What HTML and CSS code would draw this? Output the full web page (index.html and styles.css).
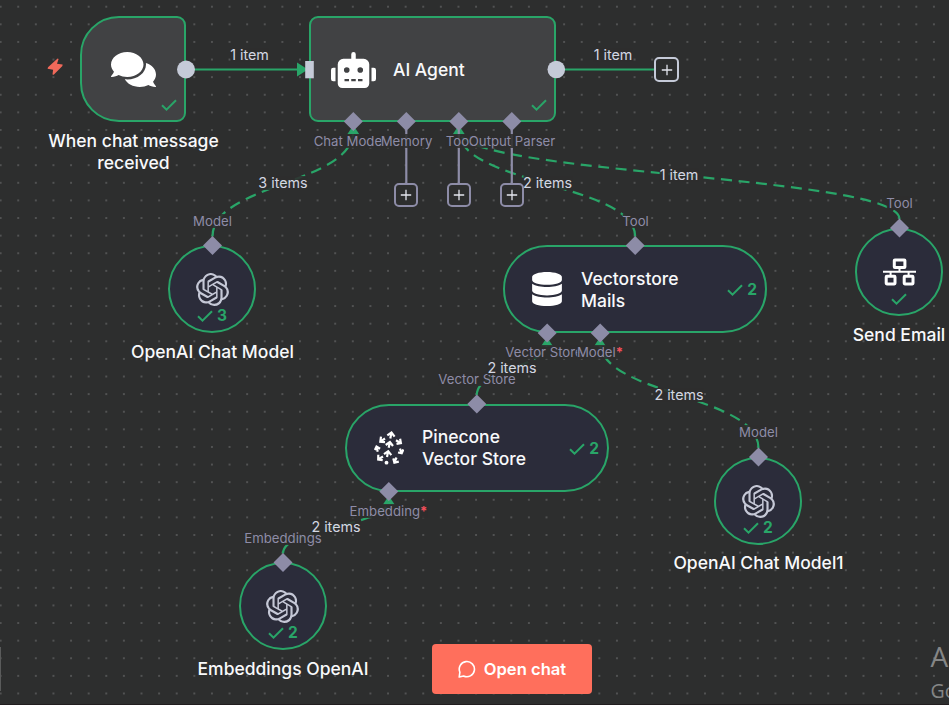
FILE: index.html
```html
<!DOCTYPE html>
<html lang="en">
<head>
<meta charset="utf-8">
<title>Workflow canvas</title>
<link rel="stylesheet" href="styles.css">
</head>
<body>
<svg class="defs" width="0" height="0" aria-hidden="true">
  <symbol id="check" viewBox="0 0 16 12"><path d="M1 6.2 5.5 10.6 15 1.2" fill="none" stroke="currentColor" stroke-width="2"/></symbol>
  <symbol id="plus" viewBox="0 0 12 12"><path d="M6 .8v10.4M.8 6h10.4" fill="none" stroke="currentColor" stroke-width="1.3"/></symbol>
  <symbol id="openai" viewBox="0 0 24 24"><path fill="currentColor" d="M22.2819 9.8211a5.9847 5.9847 0 0 0-.5157-4.9108 6.0462 6.0462 0 0 0-6.5098-2.9A6.0651 6.0651 0 0 0 4.9807 4.1818a5.9847 5.9847 0 0 0-3.9977 2.9 6.0462 6.0462 0 0 0 .7427 7.0966 5.98 5.98 0 0 0 .511 4.9107 6.051 6.051 0 0 0 6.5146 2.9001A5.9847 5.9847 0 0 0 13.2599 24a6.0557 6.0557 0 0 0 5.7718-4.2058 5.9894 5.9894 0 0 0 3.9977-2.9001 6.0557 6.0557 0 0 0-.7475-7.0729zm-9.022 12.6081a4.4755 4.4755 0 0 1-2.8764-1.0408l.1419-.0804 4.7783-2.7582a.7948.7948 0 0 0 .3927-.6813v-6.7369l2.02 1.1686a.071.071 0 0 1 .038.052v5.5826a4.504 4.504 0 0 1-4.4945 4.4944zm-9.6607-4.1254a4.4708 4.4708 0 0 1-.5346-3.0137l.142.0852 4.783 2.7582a.7712.7712 0 0 0 .7806 0l5.8428-3.3685v2.3324a.0804.0804 0 0 1-.0332.0615L9.74 19.9502a4.4992 4.4992 0 0 1-6.1408-1.6464zM2.3408 7.8956a4.485 4.485 0 0 1 2.3655-1.9728V11.6a.7664.7664 0 0 0 .3879.6765l5.8144 3.3543-2.0201 1.1685a.0757.0757 0 0 1-.071 0l-4.8303-2.7865A4.504 4.504 0 0 1 2.3408 7.872zm16.5963 3.8558L13.1038 8.364 15.1192 7.2a.0757.0757 0 0 1 .071 0l4.8303 2.7913a4.4944 4.4944 0 0 1-.6765 8.1042v-5.6772a.79.79 0 0 0-.407-.667zm2.0107-3.0231l-.142-.0852-4.7735-2.7818a.7759.7759 0 0 0-.7854 0L9.409 9.2297V6.8974a.0662.0662 0 0 1 .0284-.0615l4.8303-2.7866a4.4992 4.4992 0 0 1 6.6802 4.66zM8.3065 12.863l-2.02-1.1638a.0804.0804 0 0 1-.038-.0567V6.0742a4.4992 4.4992 0 0 1 7.3757-3.4537l-.142.0805L8.704 5.459a.7948.7948 0 0 0-.3927.6813zm1.0976-2.3654l2.602-1.4998 2.6069 1.4998v2.9994l-2.5974 1.4997-2.6067-1.4997Z"/></symbol>
</svg>

<main class="canvas">
  <svg class="edges" width="949" height="705" viewBox="0 0 949 705">
    <g class="solid">
      <path d="M194 69.5H298"/>
      <path d="M564 69.5H655"/>
    </g>
    <g class="dashed">
      <path d="M212.5 236.5C212.5 184 353.3 184 353.3 131"/>
      <path d="M635.2 236.5C635.2 184 458.8 184 458.8 131"/>
      <path d="M899.5 219C899.5 175 458.8 175 458.8 131"/>
      <path d="M476.8 395C476.8 368.5 547 368.5 547 342"/>
      <path d="M758.5 448C758.5 395 600 395 600 342"/>
      <path d="M283 553.5C283 527 388.8 527 388.8 500"/>
    </g>
    <g class="arrows">
      <path d="M297 62.5v14l11-7z"/>
      <path d="M347.3 134.3h12l-6-9z"/>
      <path d="M452.8 134.3h12l-6-9z"/>
      <path d="M541 346.2h12l-6-9z"/>
      <path d="M594 346.2h12l-6-9z"/>
      <path d="M382.8 504.7h12l-6-9z"/>
    </g>
    <path class="stub" d="M406.3 130V184M458.8 130V184M511.8 130V184"/>
  </svg>

  <svg class="bolt" viewBox="0 0 16 18"><path d="M10.6.5 1 9.3l-.4 1.5 5.5 1L5.5 16.5l1.2.2L15.4 8l.2-1.4L10 5.7 11.6 1z" fill="currentColor"/></svg>

  <section class="node trigger">
    <svg class="i-chat" viewBox="0 32 576 448"><path fill="currentColor" d="M416 192c0-88.4-93.1-160-208-160S0 103.6 0 192c0 34.3 14.1 65.9 38 92-13.4 30.2-35.5 54.2-35.8 54.5-2.2 2.3-2.8 5.7-1.5 8.7S4.8 352 8 352c36.6 0 66.9-12.3 88.7-25 32.2 15.7 70.3 25 111.3 25 114.9 0 208-71.6 208-160zm122 220c23.9-26 38-57.7 38-92 0-66.9-53.5-124.2-129.3-148.1.9 6.6 1.3 13.3 1.3 20.1 0 105.9-107.7 192-240 192-10.8 0-21.3-.8-31.7-1.9C207.8 439.6 281.8 480 368 480c41 0 79.1-9.2 111.3-25 21.8 12.7 52.1 25 88.7 25 3.2 0 6.1-1.9 7.3-4.8 1.3-2.9.7-6.3-1.5-8.7-.3-.3-22.4-24.2-35.8-54.5z"/></svg>
    <span class="corner"><svg class="check"><use href="#check"/></svg></span>
  </section>
  <h2 class="caption c-trigger">When chat message<br>received</h2>

  <section class="node agent">
    <svg class="i-robot" viewBox="0 0 640 512"><path fill="currentColor" d="M32,224H64V416H32A31.96,31.96,0,0,1,0,384V256A31.96,31.96,0,0,1,32,224Zm512-48V448a64.06,64.06,0,0,1-64,64H160a64.06,64.06,0,0,1-64-64V176a79.974,79.974,0,0,1,80-80H288V32a32,32,0,0,1,64,0V96H464A79.974,79.974,0,0,1,544,176ZM264,256a40,40,0,1,0-40,40A39.997,39.997,0,0,0,264,256Zm-8,128H192v32h64Zm96,0H288v32h64ZM456,256a40,40,0,1,0-40,40A39.997,39.997,0,0,0,456,256Zm-8,128H384v32h64ZM640,256V384a31.96,31.96,0,0,1-32,32H576V224h32A31.96,31.96,0,0,1,640,256Z"/></svg>
    <h2 class="name">AI Agent</h2>
    <span class="corner"><svg class="check"><use href="#check"/></svg></span>
  </section>

  <section class="node round n-model">
    <svg class="i-openai"><use href="#openai"/></svg>
    <div class="runs"><svg class="check"><use href="#check"/></svg>3</div>
  </section>
  <h2 class="caption c-model">OpenAI Chat Model</h2>

  <section class="node pill n-vector">
    <svg class="i-db" viewBox="0 0 448 512"><path fill="currentColor" d="M448 73.143v45.714C448 159.143 347.667 192 224 192S0 159.143 0 118.857V73.143C0 32.857 100.333 0 224 0s224 32.857 224 73.143zM448 176v102.857C448 319.143 347.667 352 224 352S0 319.143 0 278.857V176c48.125 33.143 136.208 48.572 224 48.572S399.874 209.143 448 176zm0 160v102.857C448 479.143 347.667 512 224 512S0 479.143 0 438.857V336c48.125 33.143 136.208 48.572 224 48.572S399.874 369.143 448 336z"/></svg>
    <h2 class="name">Vectorstore<br>Mails</h2>
    <div class="runs"><svg class="check"><use href="#check"/></svg>2</div>
  </section>

  <section class="node pill n-pine">
    <svg class="i-pine" viewBox="0 0 30 34" fill="none" stroke="currentColor" stroke-width="2.2">
      <path d="M16.3 7.5 17.4 2M13.3 4.4 17.5 1.5 20.6 5.6"/>
      <path d="M14.7 16.8 15.8 11.5M11.7 14 15.9 11 19 15"/>
      <path d="M13 26 14.1 20.6M10 23.2 14.2 20.2 17.3 24.2"/>
      <path d="M11 7.5 6.7 10.4M7 5.6 6.3 10.7 11 11.2"/>
      <path d="M22 9.3 26.4 12M22.5 12.9 26.9 12.2 26.1 7.7"/>
      <path d="M3.7 20.7 2.6 15.6M.8 19 2.5 15.5 6.1 17.7"/>
      <path d="M26 17.7 27.5 22M24 21.5 27.7 22.2 29.3 18.5"/>
      <path d="M9 25.5 4.5 28.3M4.3 23.8 4.2 28.5 8.7 29.2"/>
      <path d="M22.5 26.5 20.5 31.4M19.3 27.4 20.4 31.6 24.8 30.6"/>
      <circle cx="12.5" cy="31.7" r="1.9" fill="currentColor" stroke="none"/>
    </svg>
    <h2 class="name">Pinecone<br>Vector Store</h2>
    <div class="runs"><svg class="check"><use href="#check"/></svg>2</div>
  </section>

  <section class="node round n-mail">
    <svg class="i-net" viewBox="0 0 33 28" fill="none" stroke="currentColor" stroke-width="3"><rect x="11.3" y="2" width="10.6" height="7.6" rx=".6"/><rect x="3.2" y="18.3" width="8.8" height="7.6" rx=".6"/><rect x="21.2" y="18.3" width="8.8" height="7.6" rx=".6"/><path d="M0 13.8h33M16.5 10v4M7.6 14v4M25.6 14v4" stroke-width="2"/></svg>
    <div class="runs"><svg class="check"><use href="#check"/></svg></div>
  </section>
  <h2 class="caption c-mail">Send Email</h2>

  <section class="node round n-model1">
    <svg class="i-openai"><use href="#openai"/></svg>
    <div class="runs"><svg class="check"><use href="#check"/></svg>2</div>
  </section>
  <h2 class="caption c-model1">OpenAI Chat Model1</h2>

  <section class="node round n-embed">
    <svg class="i-openai"><use href="#openai"/></svg>
    <div class="runs"><svg class="check"><use href="#check"/></svg>2</div>
  </section>
  <h2 class="caption c-embed">Embeddings OpenAI</h2>

  <svg class="handles" width="949" height="705" viewBox="0 0 949 705">
    <g class="main">
      <circle cx="186" cy="69.5" r="9"/>
      <circle cx="556.3" cy="69.5" r="8.8"/>
      <rect x="305.2" y="61" width="8.6" height="17.3"/>
    </g>
    <g class="sub">
      <path d="M353.3 112 362.8 121.5 353.3 131 343.8 121.5z"/>
      <path d="M406.3 112 415.8 121.5 406.3 131 396.8 121.5z"/>
      <path d="M458.8 112 468.3 121.5 458.8 131 449.3 121.5z"/>
      <path d="M511.8 112 521.3 121.5 511.8 131 502.3 121.5z"/>
      <path d="M212.5 236 222 245.5 212.5 255 203 245.5z"/>
      <path d="M635.2 236 644.7 245.5 635.2 255 625.7 245.5z"/>
      <path d="M547.2 323.5 556.7 333 547.2 342.5 537.7 333z"/>
      <path d="M600.2 323.5 609.7 333 600.2 342.5 590.7 333z"/>
      <path d="M476.8 394.5 486.3 404 476.8 413.5 467.3 404z"/>
      <path d="M388.8 482 398.3 491.5 388.8 501 379.3 491.5z"/>
      <path d="M283 553 292.5 562.5 283 572 273.5 562.5z"/>
      <path d="M758.5 447.5 768 457 758.5 466.5 749 457z"/>
      <path d="M899.5 218.5 909 228 899.5 237.5 890 228z"/>
    </g>
  </svg>

  <span class="port p-chat">Chat Model</span>
  <span class="port p-memory">Memory</span>
  <span class="port p-tool">Tool</span>
  <span class="port p-parser">Output Parser</span>
  <span class="port p-model">Model</span>
  <span class="port p-vtool">Tool</span>
  <span class="port p-mtool">Tool</span>
  <span class="port p-store">Vector Store</span>
  <span class="port p-vmodel">Model<b>*</b></span>
  <span class="port p-pstore">Vector Store</span>
  <span class="port p-embed">Embedding<b>*</b></span>
  <span class="port p-embeds">Embeddings</span>
  <span class="port p-model1">Model</span>

  <span class="count k1">1 item</span>
  <span class="count k2">1 item</span>
  <span class="count k3">3 items</span>
  <span class="count k4">2 items</span>
  <span class="count k5">1 item</span>
  <span class="count k6">2 items</span>
  <span class="count k7">2 items</span>
  <span class="count k8">2 items</span>

  <button class="add add-out"><svg><use href="#plus"/></svg></button>
  <button class="add add-memory"><svg><use href="#plus"/></svg></button>
  <button class="add add-tool"><svg><use href="#plus"/></svg></button>
  <button class="add add-parser"><svg><use href="#plus"/></svg></button>

  <button class="open-chat">
    <svg viewBox="0 0 18 18" fill="none" stroke="currentColor" stroke-width="1.6" stroke-linejoin="round" stroke-linecap="round"><path d="M1.9 12.2A7.6 7.6 0 1 1 5.6 16L1.2 17z"/></svg>
    Open chat
  </button>

  <div class="watermark"><span class="big">A</span><span class="small">Go</span></div>
  <i class="grip"></i>
</main>
</body>
</html>
```
FILE: styles.css
```css
:root {
  --bg: #2d2e2e;
  --green: #29a568;
  --sub: #8d8ca7;
  --main: #c5cad8;
}

body {
  margin: 0;
  background: var(--bg);
  font-family: Inter, "Liberation Sans", sans-serif;
}

.defs { position: absolute; }

.canvas {
  position: relative;
  width: 949px;
  height: 705px;
  box-sizing: border-box;
  overflow: hidden;
  border-bottom: 1px solid #211d1f;
  background: radial-gradient(circle at center, #747576 0, #747576 .45px, transparent .95px) -8.2px -2.1px / 17.62px 17.62px var(--bg);
}

.edges, .handles { position: absolute; left: 0; top: 0; }
.edges path { fill: none; stroke: var(--green); stroke-width: 2.2; }
.edges .dashed path { stroke-dasharray: 11 6.6; }
.edges .arrows path { fill: var(--green); stroke: none; }
.edges .stub { stroke: var(--sub); }
.handles .main { fill: var(--main); }
.handles .sub { fill: var(--sub); }

.node {
  position: absolute;
  box-sizing: border-box;
  display: flex;
  align-items: center;
  border: 2px solid var(--green);
  color: #fff;
}

.trigger {
  left: 80px; top: 16px; width: 106px; height: 106px;
  justify-content: center;
  border-radius: 39px 9px 9px 39px;
  background: #414244;
}
.agent {
  left: 309px; top: 16px; width: 247px; height: 106px;
  padding-left: 20px; gap: 17px;
  border-radius: 9px;
  background: #414244;
}
.agent .name { padding-top: 2px; }
.corner { position: absolute; right: 7px; bottom: 9px; display: flex; color: var(--green); }
.check { width: 16px; height: 12px; flex: none; }

.round {
  width: 88px; height: 88px;
  flex-direction: column;
  border-radius: 50%;
  background: #2b2c3a;
}
.n-model { left: 168px; top: 245px; }
.n-mail { left: 855px; top: 228px; }
.n-model1 { left: 714px; top: 457px; }
.n-embed { left: 239px; top: 562px; }

.pill {
  width: 264px; height: 88px;
  padding: 0 8px 0 27px;
  border-radius: 44px;
  background: #2b2c3a;
}
.n-vector { left: 503px; top: 245px; }
.n-vector .name { padding-top: 2px; }
.n-pine { left: 345px; top: 404px; }

.runs {
  display: flex;
  align-items: center;
  gap: 4px;
  padding-top: 1px;
  color: var(--green);
  font-size: 15.5px;
  font-weight: 700;
  line-height: 18px;
}
.runs .check { stroke-width: 2.3; }
.pill .runs { margin-left: auto; }

.i-chat { width: 45px; height: 35px; }
.i-robot { width: 45px; height: 36px; margin-top: 1px; }
.i-openai { width: 33px; height: 33px; margin-top: 26px; flex: none; color: #c5c8d6; }
.n-embed .i-openai { margin-right: 1px; }
.i-db { width: 30px; height: 34px; margin-right: 19px; }
.i-pine { width: 30px; height: 34px; margin-right: 18px; }
.i-net { width: 33px; height: 28px; margin-top: 28px; margin-bottom: 6px; flex: none; }

.bolt { position: absolute; left: 47px; top: 58px; width: 16px; height: 18px; color: #f0695a; }

.name, .caption {
  margin: 0;
  color: #f8f9fb;
  font-size: 17.5px;
  font-weight: 500;
  line-height: 22px;
  white-space: nowrap;
}
.caption, .port, .count { position: absolute; transform: translate(-50%, -50%); text-align: center; white-space: nowrap; }
.c-trigger { left: 133.5px; top: 152px; }
.c-model { left: 212.5px; top: 352px; }
.c-mail { left: 899px; top: 335px; }
.c-model1 { left: 758.5px; top: 563px; }
.c-embed { left: 283px; top: 669px; }

.port {
  color: var(--sub);
  background: rgba(45, 46, 46, .88);
  font-size: 13.2px;
  line-height: 14px;
}
.port b { color: #f4505c; font-weight: 700; }
.p-chat { left: 349.5px; top: 141px; }
.p-memory { left: 406.5px; top: 141px; }
.p-tool { left: 459px; top: 141px; }
.p-parser { left: 512px; top: 141px; }
.p-model { left: 212.5px; top: 221px; }
.p-vtool { left: 635.5px; top: 221px; }
.p-mtool { left: 899.5px; top: 203px; }
.p-store { left: 544px; top: 352px; }
.p-vmodel { left: 600px; top: 352px; }
.p-pstore { left: 477px; top: 379px; }
.p-embed { left: 388.5px; top: 511px; }
.p-embeds { left: 283px; top: 538px; }
.p-model1 { left: 758.5px; top: 432px; }

.count {
  color: #d3d7e2;
  background: rgba(45, 46, 46, .88);
  font-size: 14.3px;
  line-height: 14px;
}
.k1 { left: 249.5px; top: 55px; }
.k2 { left: 613px; top: 55px; }
.k3 { left: 283px; top: 183px; }
.k4 { left: 547.5px; top: 183px; }
.k5 { left: 679px; top: 175px; }
.k6 { left: 512px; top: 368px; }
.k7 { left: 679px; top: 395px; }
.k8 { left: 336px; top: 527px; }

.add {
  position: absolute;
  box-sizing: border-box;
  width: 24px; height: 24px;
  padding: 0;
  display: flex;
  align-items: center;
  justify-content: center;
  border: 2px solid var(--sub);
  border-radius: 5px;
  background: var(--bg);
  color: #e4e6ee;
}
.add svg { width: 12px; height: 12px; }
.add-out { left: 654px; top: 57px; width: 25px; height: 25px; border-color: var(--main); }
.add-memory { left: 394px; top: 183px; }
.add-tool { left: 447px; top: 183px; }
.add-parser { left: 500px; top: 183px; }

.open-chat {
  position: absolute;
  left: 432px; top: 644px; width: 160px; height: 50px;
  display: flex;
  align-items: center;
  justify-content: center;
  gap: 8px;
  padding: 0;
  border: 0;
  border-radius: 4px;
  background: #ff6f5c;
  color: #fff;
  font: 600 16.6px Inter, "Liberation Sans", sans-serif;
}
.open-chat svg { width: 18px; height: 18px; }

.watermark {
  position: absolute;
  left: 930.5px; top: 637px;
  display: flex;
  flex-direction: column;
  color: #858686;
  font-family: "Open Sans", sans-serif;
  font-weight: 400;
}
.watermark .big { font-size: 28px; line-height: 38px; }
.watermark .small { font-size: 19.5px; line-height: 31px; }

.grip { position: absolute; left: 0; top: 647px; width: 1px; height: 44px; background: #5a5b5b; }
```
